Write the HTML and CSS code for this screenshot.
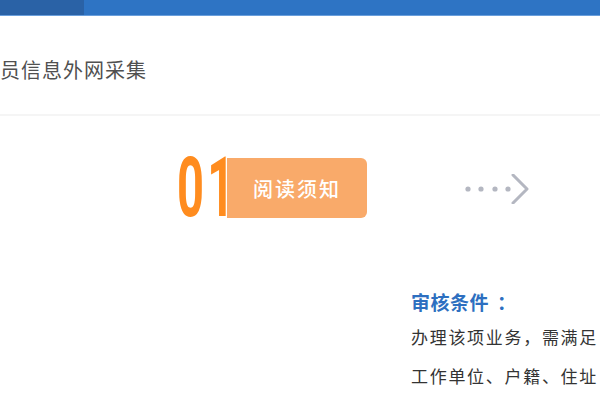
FILE: index.html
```html
<!DOCTYPE html>
<html lang="zh-CN">
<head>
<meta charset="utf-8">
<link rel="stylesheet" href="styles.css">
</head>
<body>
<div class="topbar"><div class="topbar-left"></div></div>
<div class="title-bar"><span class="title">员信息外网采集</span></div>
<div class="steps">
  <div class="step">
    <span class="step-num">01</span>
    <span class="step-label">阅读须知</span>
  </div>
  <div class="step-arrow">
    <svg width="70" height="30" viewBox="0 0 70 30">
      <circle cx="4" cy="15" r="2.6" fill="#b4b7c1"/>
      <circle cx="17" cy="15" r="2.6" fill="#b4b7c1"/>
      <circle cx="31" cy="15" r="2.6" fill="#b4b7c1"/>
      <circle cx="44" cy="15" r="2.6" fill="#b4b7c1"/>
      <path d="M49 1 L63 15 L49 29" fill="none" stroke="#b4b7c1" stroke-width="3" stroke-linecap="round" stroke-linejoin="round"/>
    </svg>
  </div>
</div>
<div class="notice">
  <h3 class="notice-title">审核条件<span class="colon">：</span></h3>
  <p class="notice-line">办理该项业务，需满足</p>
  <p class="notice-line">工作单位、户籍、住址</p>
</div>
</body>
</html>
```
FILE: styles.css
```css
html, body {
  margin: 0;
  padding: 0;
  background: #ffffff;
  overflow: hidden;
  font-family: "Noto Sans CJK SC", "Noto Sans", sans-serif;
}
.topbar {
  height: 15px;
  background: #2e74c4;
  border-bottom: 1px solid #6a9fdc;
  display: flex;
}
.topbar-left {
  width: 84px;
  background: #2a62a6;
}
.title-bar {
  height: 100px;
  border-bottom: 2px solid #f5f5f5;
  box-sizing: border-box;
  padding-top: 42px;
  white-space: nowrap;
}
.title {
  font-size: 20px;
  line-height: 24px;
  color: #505050;
  letter-spacing: 1px;
}
.steps {
  display: flex;
  align-items: center;
  padding-top: 42px;
  padding-left: 177px;
  height: 60px;
}
.step {
  display: flex;
  align-items: center;
  height: 60px;
}
.step-num {
  display: inline-block;
  width: 52px;
  font-family: "Roboto", "Liberation Sans", sans-serif;
  font-weight: 700;
  font-size: 84px;
  line-height: 60px;
  color: #ff8c1f;
  transform: scaleX(0.56);
  transform-origin: left center;
  letter-spacing: 6px;
  margin-right: -2px;
  position: relative;
  z-index: 1;
}
.step-label {
  width: 140px;
  height: 60px;
  background: #f9aa6a;
  border-radius: 0 6px 6px 0;
  color: #ffffff;
  font-size: 20px;
  font-weight: 500;
  letter-spacing: 2px;
  display: flex;
  align-items: center;
  justify-content: center;
}
.step-arrow {
  margin-left: 97px;
  height: 30px;
  margin-top: 2px;
}
.notice {
  padding-left: 411px;
  padding-top: 72px;
  white-space: nowrap;
}
.notice-title {
  margin: 0;
  font-size: 19px;
  line-height: 24px;
  font-weight: 700;
  letter-spacing: 0.5px;
  color: #2d6fc0;
}
.colon {
  margin-left: 8px;
}
.notice-line {
  margin: 0;
  font-size: 17px;
  line-height: 39px;
  letter-spacing: 1.7px;
  color: #333333;
}
.notice-title + .notice-line {
  margin-top: 3px;
}
```
